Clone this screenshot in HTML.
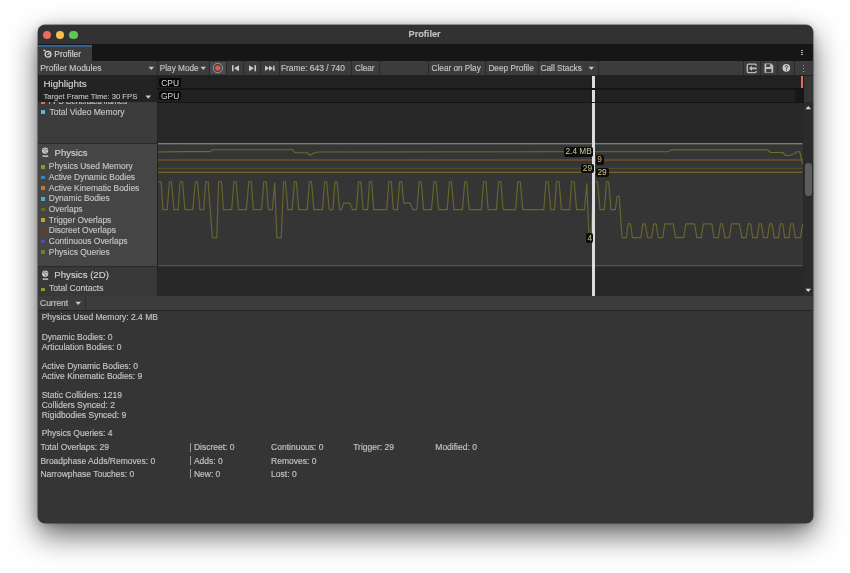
<!DOCTYPE html>
<html><head><meta charset="utf-8">
<style>
html,body{margin:0;padding:0;width:850px;height:573px;overflow:hidden;background:#ffffff;}
body{font-family:"Liberation Sans",sans-serif;color:#c4c4c4;}
.a{position:absolute;}
.t{position:absolute;white-space:pre;line-height:1;-webkit-text-stroke:0.15px currentColor;}
.lbl{position:absolute;background:#0c0c0c;border-radius:2px;font-size:8.3px;line-height:9.5px;text-align:center;white-space:pre;}
#shadow{position:absolute;left:37.5px;top:25.4px;width:775.3px;height:497.80000000000007px;border-radius:7px;background:#353535;box-shadow:0 12px 30px rgba(0,0,0,0.62),0 1px 8px rgba(0,0,0,0.22),0 0 0 0.5px rgba(0,0,0,0.6);}
#content{position:absolute;left:0;top:0;width:850px;height:573px;will-change:transform;clip-path:inset(25.4px 37.200000000000045px 49.799999999999955px 37.5px round 7px);}
</style></head><body>
<div id="shadow"></div>
<div id="content">
<div class="a" style="left:37.5px;top:25.4px;width:775.30px;height:18.60px;background:#323232;"></div>
<div class="a" style="left:42.50px;top:30.50px;width:8.2px;height:8.2px;border-radius:50%;background:#ed6a5e;"></div>
<div class="a" style="left:55.90px;top:30.50px;width:8.2px;height:8.2px;border-radius:50%;background:#f5bf4f;"></div>
<div class="a" style="left:69.40px;top:30.50px;width:8.2px;height:8.2px;border-radius:50%;background:#61c554;"></div>
<div class="t" style="left:408.60px;top:30.00px;font-size:9.15px;color:#c0c0c0;font-weight:700;">Profiler</div>
<div class="a" style="left:37.5px;top:44px;width:775.30px;height:17.00px;background:#161616;"></div>
<div class="a" style="left:37.5px;top:45.3px;width:54.50px;height:15.70px;background:#3c3c3c;"></div>
<div class="a" style="left:37.5px;top:45.3px;width:54.50px;height:1.70px;background:#37608e;"></div>
<div class="t" style="left:54.30px;top:50.00px;font-size:8.46px;color:#d0d0d0;font-weight:400;">Profiler</div>
<svg class="a" style="left:42px;top:48px" width="12" height="12" viewBox="0 0 12 12">
<circle cx="6" cy="6.3" r="2.9" fill="#454545" stroke="#d8d8d8" stroke-width="1.3"/>
<path d="M5.6 6.8 L7.7 4.8" stroke="#d8d8d8" stroke-width="1.1"/>
<rect x="1.3" y="1.9" width="2.4" height="1.3" transform="rotate(40 2.5 2.5)" fill="#d8d8d8"/>
</svg>
<div class="a" style="left:801.3px;top:49.699999999999996px;width:1.40px;height:1.40px;background:#c8c8c8;border-radius:0.5px;"></div>
<div class="a" style="left:801.3px;top:51.9px;width:1.40px;height:1.40px;background:#c8c8c8;border-radius:0.5px;"></div>
<div class="a" style="left:801.3px;top:54.1px;width:1.40px;height:1.40px;background:#c8c8c8;border-radius:0.5px;"></div>
<div class="a" style="left:37.5px;top:61px;width:775.30px;height:14.00px;background:#3c3c3c;"></div>
<div class="a" style="left:37.5px;top:74.5px;width:775.30px;height:1.00px;background:#232323;"></div>
<div class="t" style="left:40.20px;top:64.00px;font-size:8.47px;color:#c4c4c4;font-weight:400;">Profiler Modules</div>
<svg class="a" style="left:148px;top:66px" width="7" height="5" viewBox="0 0 7 5"><path d="M0.5 0.8 L6 0.8 L3.25 4 Z" fill="#c4c4c4"/></svg>
<div class="a" style="left:157px;top:61px;width:1.00px;height:14.00px;background:#2a2a2a;"></div>
<div class="t" style="left:159.80px;top:65.00px;font-size:8.24px;color:#c4c4c4;font-weight:400;">Play Mode</div>
<svg class="a" style="left:200px;top:66px" width="7" height="5" viewBox="0 0 7 5"><path d="M0.5 0.8 L6 0.8 L3.25 4 Z" fill="#c4c4c4"/></svg>
<div class="a" style="left:209px;top:61px;width:1.00px;height:14.00px;background:#2a2a2a;"></div>
<div class="a" style="left:210px;top:61.7px;width:16.00px;height:12.80px;background:#4a4a4a;"></div>
<svg class="a" style="left:212px;top:62px" width="12" height="12" viewBox="0 0 12 12">
<circle cx="5.9" cy="6" r="4.75" fill="none" stroke="#9aa3a3" stroke-width="0.85"/>
<circle cx="5.9" cy="6" r="2.55" fill="#f0534b"/>
</svg>
<div class="a" style="left:226px;top:61px;width:1.00px;height:14.00px;background:#2a2a2a;"></div>
<svg class="a" style="left:231px;top:64px" width="10" height="9" viewBox="0 0 10 9">
<rect x="1" y="1.2" width="1.5" height="6.1" fill="#c8c8c8"/>
<path d="M8 1.2 L8 7.3 L3 4.25 Z" fill="#c8c8c8"/>
</svg>
<div class="a" style="left:243px;top:61px;width:1.00px;height:14.00px;background:#2a2a2a;"></div>
<svg class="a" style="left:248px;top:64px" width="10" height="9" viewBox="0 0 10 9">
<path d="M1 1.2 L1 7.3 L6 4.25 Z" fill="#c8c8c8"/>
<rect x="6.5" y="1.2" width="1.5" height="6.1" fill="#c8c8c8"/>
</svg>
<div class="a" style="left:260px;top:61px;width:1.00px;height:14.00px;background:#2a2a2a;"></div>
<svg class="a" style="left:264px;top:64px" width="13" height="9" viewBox="0 0 13 9">
<path d="M1 1.6 L1 6.9 L5 4.25 Z" fill="#c8c8c8"/>
<path d="M5 1.6 L5 6.9 L9 4.25 Z" fill="#c8c8c8"/>
<rect x="9.2" y="1.6" width="1.4" height="5.3" fill="#c8c8c8"/>
</svg>
<div class="a" style="left:278.5px;top:61px;width:1.00px;height:14.00px;background:#2a2a2a;"></div>
<div class="t" style="left:280.90px;top:64.00px;font-size:8.42px;color:#c4c4c4;font-weight:400;">Frame: 643 / 740</div>
<div class="a" style="left:351px;top:61px;width:1.00px;height:14.00px;background:#2a2a2a;"></div>
<div class="t" style="left:355.00px;top:65.00px;font-size:8.2px;color:#c4c4c4;font-weight:400;">Clear</div>
<div class="a" style="left:378.5px;top:61px;width:1.00px;height:14.00px;background:#2a2a2a;"></div>
<div class="a" style="left:427.5px;top:61px;width:1.00px;height:14.00px;background:#2a2a2a;"></div>
<div class="t" style="left:431.60px;top:65.00px;font-size:8.2px;color:#c4c4c4;font-weight:400;">Clear on Play</div>
<div class="a" style="left:484.5px;top:61px;width:1.00px;height:14.00px;background:#2a2a2a;"></div>
<div class="t" style="left:488.40px;top:65.00px;font-size:8.26px;color:#c4c4c4;font-weight:400;">Deep Profile</div>
<div class="a" style="left:537.8px;top:61px;width:1.00px;height:14.00px;background:#2a2a2a;"></div>
<div class="t" style="left:540.60px;top:65.00px;font-size:8.24px;color:#c4c4c4;font-weight:400;">Call Stacks</div>
<svg class="a" style="left:588px;top:66px" width="7" height="5" viewBox="0 0 7 5"><path d="M0.5 0.8 L6 0.8 L3.25 4 Z" fill="#c4c4c4"/></svg>
<div class="a" style="left:597.5px;top:61px;width:1.00px;height:14.00px;background:#2a2a2a;"></div>
<div class="a" style="left:585.5px;top:63px;width:1.00px;height:10.00px;background:#353535;"></div>
<div class="a" style="left:742.7px;top:61px;width:1.00px;height:14.00px;background:#2a2a2a;"></div>
<svg class="a" style="left:746px;top:63px" width="12" height="11" viewBox="0 0 12 11">
<path d="M10.2 2.8 L10.2 2.3 Q10.2 1.1 9 1.1 L2.5 1.1 Q1.3 1.1 1.3 2.3 L1.3 8.5 Q1.3 9.6 2.5 9.6 L9 9.6 Q10.2 9.6 10.2 8.5 L10.2 8" fill="none" stroke="#bdbdbd" stroke-width="1.3"/>
<path d="M3 5.35 L6 2.7 L6 4.5 L10.8 4.5 L10.8 6.2 L6 6.2 L6 8 Z" fill="#bdbdbd"/>
</svg>
<div class="a" style="left:759.5px;top:61px;width:1.00px;height:14.00px;background:#2a2a2a;"></div>
<svg class="a" style="left:764px;top:63px" width="10" height="11" viewBox="0 0 10 11">
<path d="M0.5 0.5 L7.3 0.5 L9.2 2.4 L9.2 9.8 L0.5 9.8 Z" fill="#bdbdbd"/>
<rect x="2.2" y="1.3" width="4" height="2.6" fill="#3c3c3c"/>
<rect x="2.2" y="6" width="5.2" height="3.2" fill="#3c3c3c"/>
</svg>
<div class="a" style="left:777.1px;top:61px;width:1.00px;height:14.00px;background:#2a2a2a;"></div>
<svg class="a" style="left:781px;top:63px" width="11" height="10" viewBox="0 0 11 10">
<circle cx="5.3" cy="4.9" r="3.8" fill="#c8c8c8"/>
<path d="M4 3.8 Q4.2 2.6 5.4 2.6 Q6.7 2.7 6.6 3.8 Q6.5 4.5 5.6 4.9 L5.5 5.9" fill="none" stroke="#3c3c3c" stroke-width="1"/>
<rect x="5" y="6.5" width="1" height="1" fill="#3c3c3c"/>
</svg>
<div class="a" style="left:793.9px;top:61px;width:1.00px;height:14.00px;background:#2a2a2a;"></div>
<div class="a" style="left:802.7px;top:64.9px;width:1.40px;height:1.40px;background:#c8c8c8;border-radius:0.5px;"></div>
<div class="a" style="left:802.7px;top:67.5px;width:1.40px;height:1.40px;background:#c8c8c8;border-radius:0.5px;"></div>
<div class="a" style="left:802.7px;top:70.6px;width:1.40px;height:1.40px;background:#c8c8c8;border-radius:0.5px;"></div>
<div class="a" style="left:37.5px;top:75.5px;width:119.50px;height:220.40px;background:#3b3b3b;"></div>
<div class="a" style="left:157px;top:75.5px;width:647.00px;height:220.40px;background:#282828;"></div>
<div class="a" style="left:157px;top:75.5px;width:1.00px;height:220.40px;background:#232323;"></div>
<div class="a" style="left:37.5px;top:143.5px;width:119.50px;height:122.50px;background:#454545;"></div>
<div class="a" style="left:37.5px;top:143px;width:119.50px;height:1.00px;background:#2a2a2a;"></div>
<div class="a" style="left:37.5px;top:265.8px;width:119.50px;height:1.00px;background:#2a2a2a;"></div>
<div class="a" style="left:158px;top:143.5px;width:645.00px;height:122.50px;background:#353535;"></div>
<div class="a" style="left:158px;top:142.6px;width:645.00px;height:0.70px;background:#1f1f1f;"></div>
<div class="a" style="left:37.5px;top:266.8px;width:119.50px;height:29.10px;background:#383838;"></div>
<div class="t" style="left:48.5px;top:97.6px;font-size:8.2px;color:#c4c4c4;letter-spacing:-0.3px;">FPS Generated frames</div>
<div class="a" style="left:41.2px;top:99.8px;width:3.80px;height:3.80px;background:#d9772b;"></div>
<div class="a" style="left:41.2px;top:110px;width:3.80px;height:3.90px;background:#54b8cf;"></div>
<div class="t" style="left:49.40px;top:108.00px;font-size:8.53px;color:#c4c4c4;font-weight:400;">Total Video Memory</div>
<div class="a" style="left:37.5px;top:75.5px;width:119.50px;height:26.80px;background:#232323;"></div>
<div class="t" style="left:43.40px;top:79.00px;font-size:9.9px;color:#d2d2d2;font-weight:400;">Highlights</div>
<div class="t" style="left:43.40px;top:93.00px;font-size:7.65px;color:#bdbdbd;font-weight:400;">Target Frame Time: 30 FPS</div>
<svg class="a" style="left:144.5px;top:94.5px" width="7" height="5" viewBox="0 0 7 5"><path d="M0.5 0.5 L6 0.5 L3.25 3.7 Z" fill="#c8c8c8"/></svg>
<div class="a" style="left:157px;top:75.5px;width:647.00px;height:26.80px;background:#1d1d1d;"></div>
<div class="a" style="left:158px;top:75.5px;width:643.00px;height:13.00px;background:#212121;"></div>
<div class="a" style="left:158px;top:89.5px;width:637.00px;height:12.80px;background:#212121;"></div>
<div class="a" style="left:795px;top:89.5px;width:8.80px;height:12.80px;background:#171717;"></div>
<div class="a" style="left:801.1px;top:76px;width:2.40px;height:13.00px;background:#e96a60;"></div>
<div class="lbl" style="left:159.4px;top:77.8px;width:21.5px;height:8.8px;line-height:10.2px;font-size:8.4px;color:#d8d8d8;background:#080808;">CPU</div>
<div class="lbl" style="left:159.4px;top:91.3px;width:21.5px;height:8.8px;line-height:10.2px;font-size:8.4px;color:#d8d8d8;background:#080808;">GPU</div>
<div class="a" style="left:804px;top:102.3px;width:8.80px;height:193.60px;background:#2b2b2b;"></div>
<svg class="a" style="left:805px;top:105px" width="7" height="5" viewBox="0 0 7 5"><path d="M0.5 4.3 L6 4.3 L3.25 1 Z" fill="#d8d8d8"/></svg>
<svg class="a" style="left:805px;top:288px" width="7" height="5" viewBox="0 0 7 5"><path d="M0.5 0.7 L6 0.7 L3.25 4 Z" fill="#d8d8d8"/></svg>
<div class="a" style="left:805px;top:162.5px;width:6.70px;height:33.70px;background:#5d5d5d;border-radius:3.3px;"></div>
<svg class="a" style="left:40px;top:146px" width="10" height="12" viewBox="0 0 10 12">
<circle cx="5.1" cy="4.6" r="3.1" fill="#d0d0d0"/>
<path d="M3 3.2 Q5 4.5 6.2 7 M4.2 2 Q5.5 3.5 7.8 4.2" fill="none" stroke="#454545" stroke-width="0.7"/>
<rect x="2.6" y="9.4" width="5.6" height="1.4" fill="#d0d0d0"/>
</svg>
<div class="t" style="left:54.60px;top:148.00px;font-size:9.55px;color:#d2d2d2;font-weight:400;">Physics</div>
<div class="a" style="left:41.2px;top:164.9px;width:3.70px;height:3.70px;background:#7e9e34;"></div>
<div class="t" style="left:48.80px;top:162.00px;font-size:8.45px;color:#c4c4c4;font-weight:400;">Physics Used Memory</div>
<div class="a" style="left:41.2px;top:175.57px;width:3.70px;height:3.70px;background:#3f86b4;"></div>
<div class="t" style="left:48.80px;top:173.00px;font-size:8.45px;color:#c4c4c4;font-weight:400;">Active Dynamic Bodies</div>
<div class="a" style="left:41.2px;top:186.24px;width:3.70px;height:3.70px;background:#c8752f;"></div>
<div class="t" style="left:48.80px;top:184.00px;font-size:8.45px;color:#c4c4c4;font-weight:400;">Active Kinematic Bodies</div>
<div class="a" style="left:41.2px;top:196.91px;width:3.70px;height:3.70px;background:#52adc4;"></div>
<div class="t" style="left:48.80px;top:194.00px;font-size:8.45px;color:#c4c4c4;font-weight:400;">Dynamic Bodies</div>
<div class="a" style="left:41.2px;top:207.58px;width:3.70px;height:3.70px;background:#6f6820;"></div>
<div class="t" style="left:48.80px;top:205.00px;font-size:8.45px;color:#c4c4c4;font-weight:400;">Overlaps</div>
<div class="a" style="left:41.2px;top:218.25px;width:3.70px;height:3.70px;background:#c4a02c;"></div>
<div class="t" style="left:48.80px;top:216.00px;font-size:8.45px;color:#c4c4c4;font-weight:400;">Trigger Overlaps</div>
<div class="a" style="left:41.2px;top:228.92000000000002px;width:3.70px;height:3.70px;background:#86301a;"></div>
<div class="t" style="left:48.80px;top:226.00px;font-size:8.45px;color:#c4c4c4;font-weight:400;">Discreet Overlaps</div>
<div class="a" style="left:41.2px;top:239.59px;width:3.70px;height:3.70px;background:#5c4a98;"></div>
<div class="t" style="left:48.80px;top:237.00px;font-size:8.45px;color:#c4c4c4;font-weight:400;">Continuous Overlaps</div>
<div class="a" style="left:41.2px;top:250.26px;width:3.70px;height:3.70px;background:#7a7a2a;"></div>
<div class="t" style="left:48.80px;top:248.00px;font-size:8.45px;color:#c4c4c4;font-weight:400;">Physics Queries</div>
<svg class="a" style="left:40px;top:268.5px" width="10" height="12" viewBox="0 0 10 12">
<circle cx="5.2" cy="4.7" r="3.1" fill="#d0d0d0"/>
<path d="M3 3.2 Q5 4.5 6.2 7 M4.2 2 Q5.5 3.5 7.8 4.2" fill="none" stroke="#383838" stroke-width="0.7"/>
<rect x="2.6" y="9.4" width="5.6" height="1.4" fill="#d0d0d0"/>
</svg>
<div class="t" style="left:54.30px;top:270.00px;font-size:9.63px;color:#d2d2d2;font-weight:400;">Physics (2D)</div>
<div class="a" style="left:41.3px;top:287.6px;width:3.90px;height:3.80px;background:#7ea32a;"></div>
<div class="t" style="left:49.00px;top:284.00px;font-size:8.6px;color:#c4c4c4;font-weight:400;">Total Contacts</div>
<svg class="a" style="left:0;top:0" width="850" height="573" viewBox="0 0 850 573">
<g fill="none" stroke-linejoin="round">
<line x1="158" y1="143.8" x2="802.5" y2="143.8" stroke="#87a888" stroke-width="1.1"/>
<line x1="158" y1="160" x2="802.5" y2="160" stroke="#8c5a2c" stroke-width="1.1"/>
<line x1="158" y1="168.3" x2="802.5" y2="168.3" stroke="#5e5524" stroke-width="1.1"/>
<line x1="158" y1="172.2" x2="802.5" y2="172.2" stroke="#867430" stroke-width="1.1"/>
<polyline points="158.0,152.0 186.0,151.6 210.0,151.6 212.6,149.7 292.3,149.7 295.3,152.8 307.1,152.8 310.3,155.4 313.9,153.0 318.1,152.0 668.8,151.7 670.7,149.9 767.7,149.9 770.5,152.5 782.8,152.5 785.6,155.5 789.4,155.5 795.0,153.5 796.9,151.7 799.7,151.7 802.5,164.4" stroke="#66722a" stroke-width="1.1"/>
<polyline points="158.0,181.7 161.1,181.7 162.9,209.6 167.2,209.6 169.4,181.7 171.5,181.7 173.9,209.6 178.2,209.6 180.0,181.7 182.5,181.7 184.9,209.6 192.8,209.6 195.3,181.7 197.5,181.7 199.9,209.6 203.8,209.6 205.7,181.7 208.1,181.7 212.4,237.6 216.7,237.6 218.7,181.7 221.5,181.7 223.4,209.6 231.7,209.6 233.8,181.7 236.2,181.7 238.4,209.6 246.4,209.6 248.8,181.7 251.3,181.7 253.3,209.6 261.6,209.6 263.8,181.7 266.3,181.7 268.3,209.6 272.4,209.6 274.7,183.0 276.9,237.6 281.2,237.6 283.6,181.7 285.4,181.7 287.9,209.6 292.2,209.6 294.4,181.7 296.4,181.7 298.7,209.6 307.2,209.6 309.4,181.7 311.5,181.7 313.9,209.6 322.5,209.6 324.7,181.7 326.7,181.7 329.2,209.6 332.9,209.6 335.0,181.7 337.1,181.7 339.6,209.6 341.4,209.6 343.8,203.1 350.0,203.1 352.4,209.6 356.4,209.6 358.5,181.7 360.9,181.7 363.1,209.6 367.6,209.6 369.6,181.7 371.7,181.7 373.8,209.6 386.7,209.6 388.8,181.7 391.3,181.7 393.3,209.6 397.4,209.6 399.6,181.7 401.6,181.7 403.8,203.1 410.2,203.1 412.6,209.6 416.9,209.6 419.1,181.7 421.2,181.7 423.6,209.6 431.5,209.6 434.0,181.7 436.2,181.7 438.5,209.6 447.2,209.6 449.4,181.7 451.5,181.7 453.9,209.6 462.5,209.6 464.7,181.7 466.7,181.7 469.2,209.6 481.4,209.6 483.6,181.7 486.0,181.7 488.1,209.6 496.4,209.6 498.5,181.7 500.9,181.7 503.1,209.6 515.7,209.6 517.8,181.7 520.3,181.7 522.7,209.6 543.8,209.6 545.9,181.7 548.3,181.7 550.8,209.6 554.5,209.6 556.5,181.7 559.1,181.7 561.4,209.6 569.7,209.6 571.5,181.7 574.2,181.7 576.6,209.6 584.5,209.6 586.8,183.5 589.0,237.6 591.0,237.6 593.5,181.7 597.6,181.7 600.0,209.6 604.3,209.6 606.5,181.7 608.6,181.7 611.0,209.6 615.3,209.6 617.1,196.4 619.2,196.4 622.0,237.6 626.3,237.6 628.1,223.8 630.6,223.8 632.4,237.6 640.9,237.6 642.8,223.8 645.2,223.8 647.6,237.6 651.6,237.6 653.8,223.8 656.2,223.8 658.2,237.6 662.7,237.6 664.8,223.8 673.3,223.8 675.5,237.6 683.8,237.6 685.9,223.8 694.5,223.8 696.9,237.6 701.2,237.6 703.4,223.8 711.9,223.8 714.0,237.6 718.4,237.6 720.5,223.8 722.6,223.8 724.8,237.6 729.4,237.6 731.5,223.8 739.4,223.8 741.9,237.6 746.1,237.6 748.2,223.8 750.7,223.8 752.6,237.6 757.1,237.6 759.2,223.8 761.4,223.8 763.6,237.6 767.5,237.6 769.7,223.8 772.1,223.8 774.2,237.6 778.5,237.6 780.3,223.8 782.8,223.8 784.6,237.6 788.9,237.6 790.7,223.8 793.1,223.8 795.3,237.6 800.5,237.6 802.7,223.8" stroke="#67672b" stroke-width="1.15"/>
<line x1="158" y1="265.6" x2="802.5" y2="265.6" stroke="#594b6c" stroke-width="1.1"/>
</g>
</svg>
<div class="a" style="left:591.3px;top:75.5px;width:4.60px;height:27.20px;background:#1c1c1c;"></div>
<div class="a" style="left:592.2px;top:75.5px;width:2.80px;height:220.40px;background:#dcdcdc;"></div>
<div class="a" style="left:157px;top:88.4px;width:647.00px;height:1.20px;background:#141414;"></div>
<div class="a" style="left:157px;top:101.7px;width:647.00px;height:1.00px;background:#141414;"></div>
<div class="lbl" style="left:564.2px;top:147px;width:28.9px;height:9.5px;color:#c8cc90;">2.4 MB</div>
<div class="lbl" style="left:595.5px;top:155px;width:8.3px;height:9.6px;color:#d9b088;">9</div>
<div class="lbl" style="left:581.2px;top:163.7px;width:12.4px;height:9.4px;color:#c8c096;">29</div>
<div class="lbl" style="left:595.5px;top:167.5px;width:13.1px;height:9.4px;color:#d8c68a;">29</div>
<div class="lbl" style="left:585.9px;top:232.5px;width:7.6px;height:10px;line-height:10px;color:#c8c8a0;">4</div>
<div class="a" style="left:37.5px;top:295.9px;width:775.30px;height:14.10px;background:#3c3c3c;"></div>
<div class="a" style="left:37.5px;top:309.5px;width:775.30px;height:1.00px;background:#242424;"></div>
<div class="t" style="left:40.10px;top:299.00px;font-size:8.42px;color:#c4c4c4;font-weight:400;">Current</div>
<svg class="a" style="left:75px;top:300.5px" width="7" height="5" viewBox="0 0 7 5"><path d="M0.5 0.8 L6 0.8 L3.25 4 Z" fill="#c8c8c8"/></svg>
<div class="a" style="left:84.6px;top:295.9px;width:1.00px;height:14.10px;background:#2a2a2a;"></div>
<div class="t" style="left:41.70px;top:313.00px;font-size:8.5px;color:#c4c4c4;font-weight:400;">Physics Used Memory: 2.4 MB</div>
<div class="t" style="left:41.70px;top:333.00px;font-size:8.5px;color:#c4c4c4;font-weight:400;">Dynamic Bodies: 0</div>
<div class="t" style="left:41.70px;top:343.00px;font-size:8.5px;color:#c4c4c4;font-weight:400;">Articulation Bodies: 0</div>
<div class="t" style="left:41.70px;top:362.00px;font-size:8.5px;color:#c4c4c4;font-weight:400;">Active Dynamic Bodies: 0</div>
<div class="t" style="left:41.70px;top:372.00px;font-size:8.5px;color:#c4c4c4;font-weight:400;">Active Kinematic Bodies: 9</div>
<div class="t" style="left:41.70px;top:391.00px;font-size:8.5px;color:#c4c4c4;font-weight:400;">Static Colliders: 1219</div>
<div class="t" style="left:41.70px;top:401.00px;font-size:8.5px;color:#c4c4c4;font-weight:400;">Colliders Synced: 2</div>
<div class="t" style="left:41.70px;top:411.00px;font-size:8.5px;color:#c4c4c4;font-weight:400;">Rigidbodies Synced: 9</div>
<div class="t" style="left:41.70px;top:429.00px;font-size:8.5px;color:#c4c4c4;font-weight:400;">Physics Queries: 4</div>
<div class="t" style="left:40.40px;top:443.00px;font-size:8.5px;color:#c4c4c4;font-weight:400;">Total Overlaps: 29</div>
<div class="t" style="left:193.90px;top:443.00px;font-size:8.5px;color:#c4c4c4;font-weight:400;">Discreet: 0</div>
<div class="t" style="left:271.10px;top:443.00px;font-size:8.5px;color:#c4c4c4;font-weight:400;">Continuous: 0</div>
<div class="t" style="left:353.20px;top:443.00px;font-size:8.5px;color:#c4c4c4;font-weight:400;">Trigger: 29</div>
<div class="t" style="left:435.30px;top:443.00px;font-size:8.5px;color:#c4c4c4;font-weight:400;">Modified: 0</div>
<div class="a" style="left:190.2px;top:442.5px;width:1.00px;height:9.50px;background:#9a9a9a;"></div>
<div class="t" style="left:40.40px;top:457.00px;font-size:8.5px;color:#c4c4c4;font-weight:400;">Broadphase Adds/Removes: 0</div>
<div class="t" style="left:193.90px;top:457.00px;font-size:8.5px;color:#c4c4c4;font-weight:400;">Adds: 0</div>
<div class="t" style="left:271.10px;top:457.00px;font-size:8.5px;color:#c4c4c4;font-weight:400;">Removes: 0</div>
<div class="a" style="left:190.2px;top:455.7px;width:1.00px;height:9.50px;background:#9a9a9a;"></div>
<div class="t" style="left:40.40px;top:470.00px;font-size:8.5px;color:#c4c4c4;font-weight:400;">Narrowphase Touches: 0</div>
<div class="t" style="left:193.90px;top:470.00px;font-size:8.5px;color:#c4c4c4;font-weight:400;">New: 0</div>
<div class="t" style="left:271.10px;top:470.00px;font-size:8.5px;color:#c4c4c4;font-weight:400;">Lost: 0</div>
<div class="a" style="left:190.2px;top:468.6px;width:1.00px;height:9.50px;background:#9a9a9a;"></div>
</div>
</body></html>
